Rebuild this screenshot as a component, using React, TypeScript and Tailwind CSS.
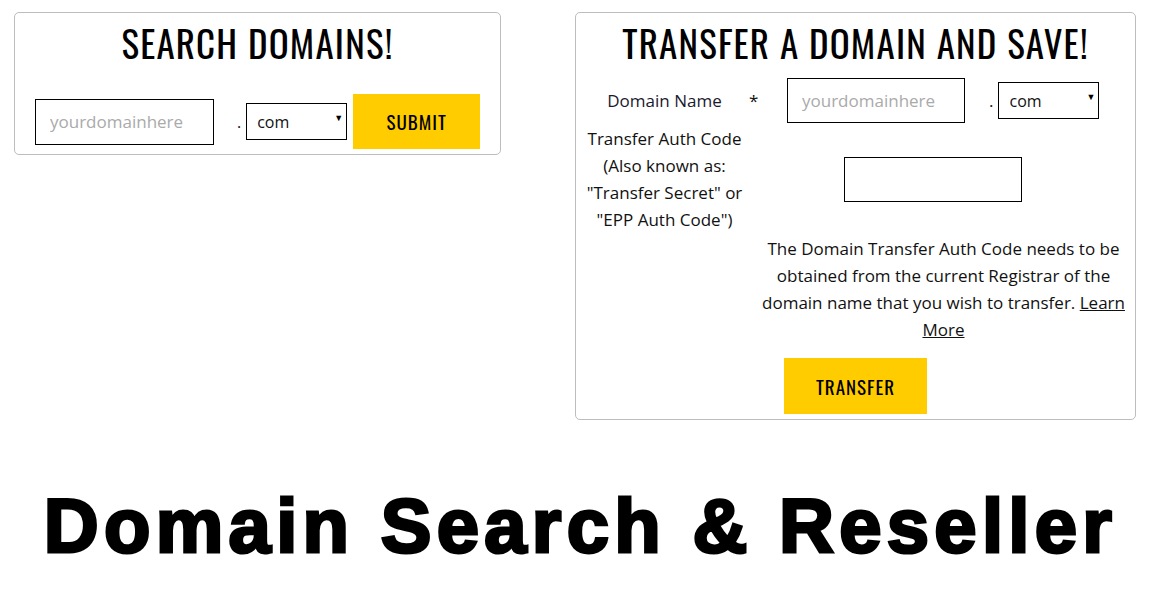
import React from "react";

const heading = "font-['Oswald','Liberation_Sans_Narrow','DejaVu_Sans_Condensed','Roboto_Condensed',sans-serif]";
const body = "font-['Open_Sans','Noto_Sans',sans-serif]";

function TldSelect({ className }: { className?: string }) {
  return (
    <div className={"relative " + (className || "")}>
      <select
        defaultValue="com"
        className={`w-full h-full appearance-none border border-black bg-white pl-[10px] text-[16px] text-[#111] ${body}`}
      >
        <option value="com">com</option>
        <option value="net">net</option>
        <option value="org">org</option>
      </select>
      <span className="pointer-events-none absolute right-[4px] top-[8px] text-[9px] text-black">▼</span>
    </div>
  );
}

export default function App() {
  return (
    <main className={`min-h-screen bg-white text-[#111] ${body}`}>
      <div className="flex items-start gap-[74px] pl-[14px] pt-[12px]">
        {/* search card */}
        <div className="w-[487px] h-[143px] rounded-[5px] border border-[#bdbdbd]">
          <h2 className={`${heading} text-center text-[37px] leading-[40px] mt-[10px] tracking-[1.2px] text-black`}>
            SEARCH DOMAINS!
          </h2>
          <div className="flex items-center mt-[31px] pl-[20px]">
            <input
              placeholder="yourdomainhere"
              className="w-[179px] h-[46px] border border-black px-[14px] text-[17px] placeholder:text-[#aaa] outline-none"
            />
            <span className="ml-[23px] mr-[5px] text-[16px]">.</span>
            <TldSelect className="w-[101px] h-[37px]" />
            <button className={`${heading} ml-[6px] w-[127px] h-[55px] bg-[#ffcc00] text-[19px] tracking-[1px] text-black`}>
              SUBMIT
            </button>
          </div>
        </div>

        {/* transfer card */}
        <div className="w-[561px] h-[408px] rounded-[5px] border border-[#bdbdbd]">
          <h2 className={`${heading} text-center text-[37px] leading-[40px] mt-[10px] tracking-[1.2px] text-black`}>
            TRANSFER A DOMAIN AND SAVE!
          </h2>
          <div className="flex items-center mt-[15px] text-[17px]">
            <span className="w-[173px] text-center text-[#1a1a2e] pl-[4px]">Domain Name</span>
            <span className="w-[8px]">*</span>
            <input
              placeholder="yourdomainhere"
              className="ml-[30px] w-[178px] h-[45px] border border-black px-[14px] text-[17px] placeholder:text-[#aaa] outline-none"
            />
            <span className="ml-[24px] mr-[5px]">.</span>
            <TldSelect className="w-[101px] h-[37px]" />
          </div>
          <div className="flex mt-[2px] text-[17px] leading-[27px]">
            <p className="w-[173px] text-center pl-[4px]">
              Transfer Auth Code (Also known as: "Transfer Secret" or "EPP Auth Code")
            </p>
            <div className="flex-1 pt-[32px] pl-[95px]">
              <input className="w-[178px] h-[45px] border border-black px-[10px] outline-none" />
            </div>
          </div>
          <p className="ml-[182px] mr-[6px] text-center text-[17px] leading-[27px] mt-[2px]">
            The Domain Transfer Auth Code needs to be obtained from the current Registrar of the domain name
            that you wish to transfer. <a href="#" className="underline">Learn More</a>
          </p>
          <button className={`${heading} ml-[208px] mt-[15px] w-[143px] h-[56px] bg-[#ffcc00] text-[19px] tracking-[1px] text-black`}>
            TRANSFER
          </button>
        </div>
      </div>

      <h1 className="mt-[61px] pl-[12px] text-center font-['Liberation_Sans','Arial',sans-serif] font-bold text-[76px] leading-[90px] tracking-[5.3px] [-webkit-text-stroke:3px_black] text-black">
        Domain Search &amp; Reseller
      </h1>
    </main>
  );
}
